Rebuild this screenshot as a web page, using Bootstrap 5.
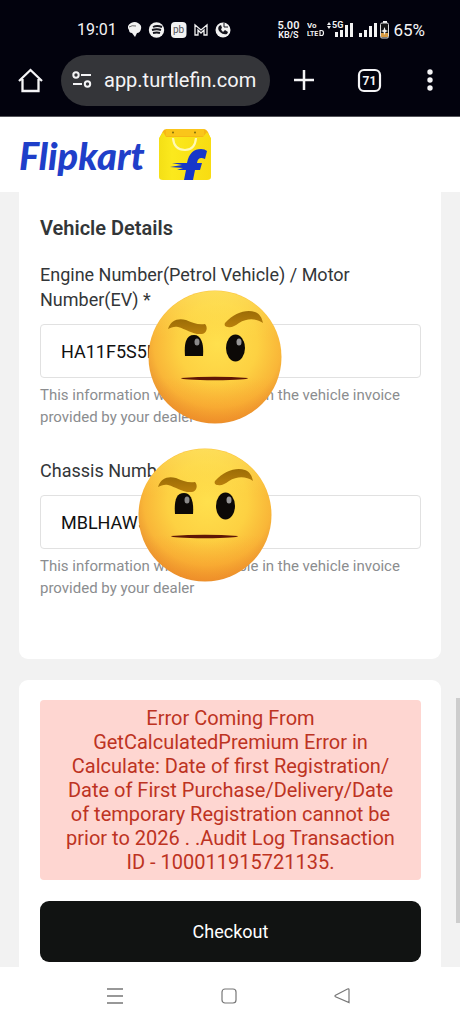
<!DOCTYPE html>
<html lang="en">
<head>
<meta charset="utf-8">
<meta name="viewport" content="width=device-width, initial-scale=1">
<title>Vehicle Details</title>
<link href="https://cdn.jsdelivr.net/npm/bootstrap@5.3.0/dist/css/bootstrap.min.css" rel="stylesheet">
<style>
  body { font-family: Roboto, "Noto Sans", sans-serif; background: #f2f2f2; color: #333638; overflow: hidden; }
  svg { display: block; flex: none; }
  .chrome { background: #02020d; color: #f4f4f6; border-bottom: 1px solid #55555a; }
  .status { height: 54px; padding: 6px 35px 0 77px; }
  .clock { font-size: 16px; line-height: 20px; width: 37px; }
  .notices { margin-left: 14px; }
  .tiny { font-size: 9px; line-height: 8px; font-weight: 600; }
  .tiny .speed { font-size: 11px; line-height: 10px; }
  .battery-text { font-size: 17px; line-height: 20px; }
  .toolbar { height: 62px; padding: 0 18px 10px 12px; }
  .address { background: #343539; border-radius: 26px; height: 51px; padding: 0 11px; margin-left: 12px; }
  .address input { background: none; border: 0; outline: 0; color: #f4f4f6; font-size: 20px; line-height: 26px; width: 0; min-width: 0; padding: 0; }
  .tool { background: none; border: 0; color: inherit; padding: 6px; }
  .tool-group { width: 40%; padding-left: 17px; }
  .brand-bar { height: 75px; padding: 0 19px; }
  .brand-name { font-family: Lato, sans-serif; font-weight: 900; font-style: italic; font-size: 38px; line-height: 40px; color: #1f3fc9; width: 139px; }
  .page { padding: 0 19px; }
  .panel { background: #fff; border-radius: 9px 9px 0 0; padding: 20px 20px 5px 21px; }
  .panel-top { border-radius: 0 0 9px 9px; padding: 24px 20px 60px 21px; margin-bottom: 21px; }
  .panel h1 { font-size: 20px; line-height: 24px; font-weight: 600; margin: 0 0 22px; }
  .entry { position: relative; }
  .entry + .entry { margin-top: 30px; }
  .entry label { font-size: 18px; line-height: 25px; display: block; margin-bottom: 12px; }
  .entry .form-control { height: 54px; border: 1px solid #e1e1e1; border-radius: 4px; padding: 0 20px; font-size: 18px; color: #111; }
  .hint { font-size: 15px; line-height: 22px; color: #8b8d8f; margin: 6px 0 0; }
  .face { position: absolute; width: 134px; }
  .face-first { left: 108px; top: 27px; }
  .face-second { left: 98px; bottom: 16px; }
  .error-box { background: #fed6d1; color: #bd3322; border-radius: 4px; font-size: 20px; line-height: 24px; padding: 6px 20px; }
  .checkout { background: #111312; color: #fff; border-radius: 9px; height: 61px; font-size: 18px; margin-top: 21px; }
  .checkout:hover { background: #111312; color: #fff; }
  .thumb { position: absolute; right: 0; top: 698px; width: 4px; height: 225px; background: #cdcdcd; }
  .system-nav { height: 57px; padding: 0 102px 0 99px; }
  .system-nav button { background: none; border: 0; padding: 6px; }
</style>
</head>
<body>
<svg width="0" height="0" class="position-absolute" aria-hidden="true">
  <defs>
    <radialGradient id="skin" cx=".52" cy=".4" r=".6">
      <stop offset="0" stop-color="#ffe04d"/><stop offset=".5" stop-color="#fdd142"/><stop offset=".8" stop-color="#f9b638"/><stop offset="1" stop-color="#e88f2e"/>
    </radialGradient>
    <linearGradient id="shine" x1="0" y1="0" x2="0" y2="1">
      <stop offset="0" stop-color="#ffef6b" stop-opacity=".6"/><stop offset=".35" stop-color="#ffe04d" stop-opacity="0"/><stop offset=".65" stop-color="#f79a2a" stop-opacity="0"/><stop offset="1" stop-color="#f48d24" stop-opacity=".5"/>
    </linearGradient>
    <linearGradient id="brow" x1="0" y1="0" x2="0" y2="1"><stop offset="0" stop-color="#9c6c06"/><stop offset="1" stop-color="#b9800c"/></linearGradient>
    <symbol id="face" viewBox="0 0 134 136">
      <circle cx="67" cy="68" r="66.500" fill="url(#skin)"/>
      <circle cx="67" cy="68" r="66" fill="url(#shine)"/>
      <path d="M20 40C23 31 30 29 38 31C45 34 50 36 57 35C60 38 59 44 54 45C45 46 38 40 30 38C26 37 23 39 20 40Z" fill="url(#brow)"/>
      <path d="M77 34C86 24 98 20 107 23C112 25 114 29 115 34C108 29 99 29 91 34C87 37 83 39 80 38C77 38 76 36 77 34Z" fill="url(#brow)"/>
      <path d="M37 67C36 54 38 46 46 46C53 46 56 54 55 67Z" fill="#0c0907"/>
      <ellipse cx="87.500" cy="59" rx="9.500" ry="13.500" fill="#0c0907"/>
      <ellipse cx="49" cy="53" rx="2.500" ry="3.500" fill="#aaa" opacity=".8"/>
      <ellipse cx="91" cy="53" rx="2.500" ry="3.500" fill="#bbb" opacity=".8"/>
      <path d="M33 89Q67 86.500 100 89Q100 91 67 91.300Q33 91 33 89Z" fill="#5f1606"/>
    </symbol>
  </defs>
</svg>

<div class="min-vh-100 d-flex flex-column position-relative">
  <header>
    <div class="chrome">
      <div class="status d-flex align-items-center">
        <span class="clock">19:01</span>
        <svg class="notices" width="104" height="18" viewBox="1 0 104 18" fill="#f2f2f2">
          <path d="M4 2Q8 0 11 2Q15 4 14 8Q13 12 10 12L8 16L5 12Q2 12 2 9Q-1 5 4 2Z"/>
          <path d="M2 6Q5 4 9 5" fill="none" stroke="#444" stroke-width=".8"/>
          <circle cx="29.500" cy="9" r="7.700"/>
          <path d="M26 6Q30 4 35 6M25 9Q30 7.500 34 9M26 12Q30 11 33 12" stroke="#15151d" stroke-width="1.900" fill="none"/>
          <rect x="44" y="1" width="15.500" height="16" rx="4"/>
          <text x="46" y="11.500" font-size="10" fill="#55555b">pb</text>
          <path d="M68 14V4L74 9L80 4V14H77V9L74 12L71 9V14Z" fill="none" stroke="#f2f2f2" stroke-width="1.300"/>
          <circle cx="96" cy="9" r="7.500"/>
          <path d="M92 5Q90 8 93 11Q96 14 100 13L101 11L98 9L96 11Q94 9 94 8L95 7L94 4Z" fill="#15151d"/>
          <path d="M97 2V6H101" stroke="#15151d" fill="none"/>
        </svg>
        <div class="d-flex align-items-center ms-auto">
          <div class="tiny text-center"><div class="speed">5.00</div>KB/S</div>
          <svg class="ms-2" width="82" height="20" viewBox="0 0 82 20" fill="#f2f2f2" font-weight="700">
            <text x="0" y="8" font-size="8">Vo</text><text x="0" y="16" font-size="7">LTE</text>
            <path d="M13 10.500H14.500Q16.500 10.500 16.500 13Q16.500 15.500 14.500 15.500H13Z" fill="none" stroke="#f2f2f2" stroke-width="1.200"/>
            <path d="M20 5L22 2L24 5ZM20 6H24L22 9Z"/><text x="25" y="8" font-size="9">5G</text>
            <path d="M28 12h3v5h-3zM33 10h3v7h-3zM38 5h3v12h-3zM43 3h3v14h-3zM52 13h3v4h-3zM57 10h3v7h-3zM62 6h3v11h-3zM67 3h3v14h-3z"/>
            <path d="M76 1h4v2h-4z"/><rect x="73.500" y="3" width="8" height="15" rx="1.500" fill="#161616" stroke="#ddd"/>
            <path d="M74 13h7v4h-7z" fill="#d79a42"/><path d="M77.500 7L78.500 10L81 11L78.500 12L77.500 15L76.500 12L74 11L76.500 10Z"/>
          </svg>
          <span class="battery-text ps-1">65%</span>
        </div>
      </div>
      <div class="toolbar d-flex align-items-center">
        <button class="tool" aria-label="Home"><svg width="25" height="26" viewBox="0 0 25 26" fill="none" stroke="currentColor" stroke-width="2.300"><path d="M1 14L12.500 3L24 14M4.500 12V24H20.500V12"/></svg></button>
        <div class="address d-flex align-items-center flex-grow-1">
          <svg width="20" height="20" viewBox="0 0 20 20" fill="none" stroke="#f4f4f6" stroke-width="2"><circle cx="4" cy="5" r="2.700"/><path d="M9 5H19M1 14H10"/><circle cx="15.500" cy="14" r="2.700"/></svg>
          <input class="flex-grow-1 ms-2 ps-1" type="text" value="app.turtlefin.com" aria-label="Address">
        </div>
        <div class="tool-group d-flex align-items-center justify-content-between">
          <button class="tool" aria-label="New tab"><svg width="22" height="22" viewBox="0 0 22 22" stroke="currentColor" stroke-width="2.500"><path d="M1 11H21M11 1V21"/></svg></button>
          <button class="tool" aria-label="Tabs"><svg width="25" height="25" viewBox="0 0 25 25"><rect x="2" y="2" width="21" height="21" rx="5" fill="none" stroke="currentColor" stroke-width="2.200"/><text x="12.500" y="17" font-size="12" font-weight="700" text-anchor="middle" fill="currentColor">71</text></svg></button>
          <button class="tool" aria-label="Menu"><svg width="12" height="22" viewBox="0 0 12 22" fill="currentColor"><circle cx="6" cy="3" r="2.700"/><circle cx="6" cy="11" r="2.700"/><circle cx="6" cy="19" r="2.700"/></svg></button>
        </div>
      </div>
    </div>
    <div class="brand-bar bg-white d-flex align-items-center">
      <span class="brand-name">Flipkart</span>
      <svg width="54" height="54" viewBox="0 0 54 54">
        <defs><linearGradient id="bag" x1="0" x2="1"><stop offset="0" stop-color="#f4df16"/><stop offset=".25" stop-color="#fbe91d"/><stop offset="1" stop-color="#f8dc12"/></linearGradient></defs>
        <path d="M5 3Q6 1 9 1H46Q48 1 50 4L52 9H2Z" fill="#f6b715"/>
        <path d="M1 10L5 4L8 9H45L49 4L53 10V49Q53 52 49 52H5Q1 52 1 49Z" fill="url(#bag)"/>
        <path d="M8 1H46V8H8Z" fill="#fac51a"/>
        <circle cx="15" cy="4.500" r="1" fill="#80700c"/><circle cx="37" cy="4.500" r="1" fill="#80700c"/>
        <path d="M15 10Q16 22 27 22Q37 22 38 10" fill="none" stroke="#fff9b5" stroke-width="2.200"/>
        <path d="M26 52L28 42H19L25 40L12 39L24 37L14 35H29C31 25 36 21 43 21Q47 21 49 23L47 31Q40 28 39 35H44L42 42H37L35 52Z" fill="#1737c9"/>
      </svg>
    </div>
  </header>

  <main class="page flex-grow-1">
    <form>
      <section class="panel panel-top">
        <h1>Vehicle Details</h1>
        <div class="entry">
          <label for="engine">Engine Number(Petrol Vehicle) / Motor Number(EV) *</label>
          <input class="form-control" id="engine" type="text" value="HA11F5S5L">
          <p class="hint">This information will be available in the vehicle invoice provided by your dealer</p>
          <svg class="face face-first" viewBox="0 0 134 136" aria-hidden="true"><use href="#face"/></svg>
        </div>
        <div class="entry">
          <label for="chassis">Chassis Number *</label>
          <input class="form-control" id="chassis" type="text" value="MBLHAW5">
          <p class="hint">This information will be available in the vehicle invoice provided by your dealer</p>
          <svg class="face face-second" viewBox="0 0 134 136" aria-hidden="true"><use href="#face"/></svg>
        </div>
      </section>
      <section class="panel">
        <div class="error-box text-center" role="alert">Error Coming From GetCalculatedPremium Error in Calculate: Date of first Registration/ Date of First Purchase/Delivery/Date of temporary Registration cannot be prior to 2026 . .Audit Log Transaction ID - 100011915721135.</div>
        <button class="btn checkout w-100" type="button">Checkout</button>
      </section>
    </form>
  </main>

  <nav class="system-nav bg-white d-flex align-items-center justify-content-between" aria-label="System">
    <button aria-label="Recent apps"><svg width="20" height="18" viewBox="0 0 20 18" stroke="#777" stroke-width="1.300"><path d="M2 2H18M2 9H18M2 16H18"/></svg></button>
    <button aria-label="Home screen"><svg width="18" height="18" viewBox="0 0 18 18"><rect x="2" y="2" width="14" height="14" rx="3" fill="none" stroke="#777" stroke-width="1.200"/></svg></button>
    <button aria-label="Back"><svg width="20" height="18" viewBox="0 0 20 18"><path d="M17 2.500V15.500L3.500 9.700Q2.500 9 3.500 8.300L15.500 2Q17 1.500 17 2.500Z" fill="none" stroke="#777" stroke-width="1.200"/></svg></button>
  </nav>
  <div class="thumb"></div>
</div>
<script src="https://cdn.jsdelivr.net/npm/bootstrap@5.3.0/dist/js/bootstrap.bundle.min.js"></script>
</body>
</html>
